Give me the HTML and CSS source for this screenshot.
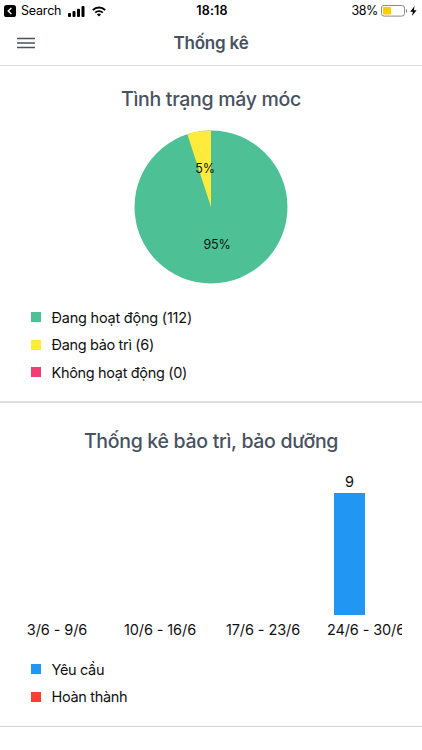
FILE: index.html
```html
<!DOCTYPE html>
<html lang="vi">
<head>
<meta charset="UTF-8">
<meta name="viewport" content="width=device-width, initial-scale=1.0">
<title>Thống kê</title>
<link rel="stylesheet" href="styles.css">
</head>
<body>

    <div class="status-bar">
        <div class="status-left">
            <svg width="12" height="12" viewBox="0 0 12 12">
                <rect width="12" height="12" rx="2.6" fill="#000"/>
                <path d="M7.4 3L4.2 6l3.2 3" fill="none" stroke="#fff" stroke-width="1.4"/>
            </svg>
            <span class="back-app">Search</span>
            <svg class="signal" width="17" height="11" viewBox="0 0 17 11">
                <rect x="0" y="7" width="3" height="4" rx="0.9"/>
                <rect x="4.5" y="5" width="3" height="6" rx="0.9"/>
                <rect x="9" y="2.8" width="3" height="8.2" rx="0.9"/>
                <rect x="13.5" y="0" width="3" height="11" rx="0.9"/>
            </svg>
            <svg class="wifi" width="14" height="11" viewBox="0 0 14 11">
                <path d="M0.8 4.1a8.8 8.8 0 0 1 12.4 0" fill="none" stroke="#000" stroke-width="2"/>
                <path d="M3.2 6.7a5.4 5.4 0 0 1 7.6 0" fill="none" stroke="#000" stroke-width="1.8"/>
                <path d="M7 10.6L4.9 8.5a3 3 0 0 1 4.2 0z"/>
            </svg>
        </div>
        <div class="time">18:18</div>
        <div class="status-right">
            <span class="percent">38%</span>
            <svg class="battery" width="27" height="12" viewBox="0 0 27 12">
                <rect x="0.5" y="0.5" width="23" height="10.6" rx="2.6" fill="#fff" stroke="#8c8c8c"/>
                <rect x="2" y="2" width="8" height="7.6" rx="0.8" fill="#fc0"/>
                <path d="M25 4v4c1.6-.6 1.6-3.4 0-4z" fill="#8c8c8c"/>
            </svg>
            <svg class="bolt" width="7" height="10" viewBox="0 0 7 10">
                <path d="M4.6 0L0.2 5.7h2.7L2 10l4.6-5.8H3.8z"/>
            </svg>
        </div>
    </div>

    <div class="navbar">
        <svg class="menu" width="18" height="12" viewBox="0 0 18 12">
            <path d="M0 1.5h18M0 6h18M0 10.5h18" stroke="#4a5362" stroke-width="1.4"/>
        </svg>
        <h1>Thống kê</h1>
    </div>

    <div class="section machines">
        <h2>Tình trạng máy móc</h2>
        <svg class="pie" width="154" height="154" viewBox="-77 -77 154 154">
            <circle r="76.5" fill="#4dc195"/>
            <path d="M0 0V-76.5A76.5 76.5 0 0 0 -23.64 -72.76z" fill="#ffeb3b"/>
            <text x="-6" y="-34">5%</text>
            <text x="6" y="41.5">95%</text>
        </svg>
        <div class="legend">
            <div class="legend-item"><i class="green"></i><span class="active">Đang hoạt động (112)</span></div>
            <div class="legend-item"><i class="yellow"></i><span>Đang bảo trì (6)</span></div>
            <div class="legend-item"><i class="pink"></i><span>Không hoạt động (0)</span></div>
        </div>
    </div>

    <div class="section maintenance">
        <h2>Thống kê bảo trì, bảo dưỡng</h2>
        <div class="chart">
            <div class="columns">
                <div class="column">
                    <div class="bars"></div>
                    <label>3/6 - 9/6</label>
                </div>
                <div class="column">
                    <div class="bars"></div>
                    <label>10/6 - 16/6</label>
                </div>
                <div class="column">
                    <div class="bars"></div>
                    <label>17/6 - 23/6</label>
                </div>
                <div class="column">
                    <div class="bars">
                        <div class="bar-group">
                            <span class="value">9</span>
                            <div class="bar" style="height: 122px"></div>
                        </div>
                    </div>
                    <label>24/6 - 30/6</label>
                </div>
            </div>
        </div>
        <div class="legend">
            <div class="legend-item"><i class="blue"></i><span>Yêu cầu</span></div>
            <div class="legend-item"><i class="red"></i><span>Hoàn thành</span></div>
        </div>
    </div>

</body>
</html>
```

FILE: styles.css
```css
body {
    margin: 0;
    background: #fff;
    color: #111;
    font-family: Inter, "Noto Sans", sans-serif;
    overflow: hidden;
}
svg {
    display: block;
    flex: none;
}
.status-bar {
    display: grid;
    grid-template-columns: 1fr auto 1fr;
    height: 22px;
    padding: 0 5px 0 4px;
    font-size: 12.5px;
    line-height: 22px;
    color: #000;
}
.status-left,
.status-right {
    display: flex;
    align-items: center;
}
.status-right {
    justify-content: flex-end;
}
.back-app {
    margin-left: 5px;
    width: 39px;
    letter-spacing: -0.2px;
    white-space: nowrap;
}
.signal {
    margin-left: 8px;
}
.wifi {
    margin-left: 7px;
}
.time {
    padding-left: 3px;
    font-weight: 600;
    letter-spacing: 0.2px;
}
.percent {
    letter-spacing: -0.4px;
}
.battery {
    margin-left: 3px;
}
.bolt {
    margin-left: 2px;
}
.navbar {
    display: grid;
    grid-template-columns: 60px 1fr 60px;
    align-items: center;
    height: 43px;
    border-bottom: 1px solid #dcdcdc;
}
.menu {
    margin-left: 17px;
    margin-bottom: 1px;
}
h1,
h2 {
    margin: 0;
    color: #475260;
    text-align: center;
    white-space: nowrap;
}
h1 {
    padding-bottom: 2px;
    font-size: 17px;
    font-weight: 600;
    line-height: 40px;
    letter-spacing: -0.2px;
}
h2 {
    font-size: 19.5px;
    font-weight: 500;
    line-height: 30px;
    letter-spacing: -0.3px;
}
.section {
    box-sizing: border-box;
}
.machines {
    height: 337px;
    padding-top: 18px;
    border-bottom: 2px solid #dedede;
}
.pie {
    margin: 16px auto 0;
}
.pie text {
    font-size: 12.5px;
    letter-spacing: -0.2px;
    text-anchor: middle;
    fill: #111;
}
.legend {
    padding-left: 31px;
    font-size: 14.5px;
    letter-spacing: -0.33px;
}
.active {
    letter-spacing: -0.22px;
}
.machines .legend {
    margin-top: 19.5px;
}
.legend-item {
    display: flex;
    align-items: center;
    height: 27.5px;
}
.legend-item i {
    width: 10px;
    height: 10px;
    margin-right: 10.5px;
}
.green { background: #4dc195; }
.yellow { background: #ffeb3b; }
.pink { background: #f43b75; }
.blue { background: #2196f3; }
.red { background: #f44336; }
.maintenance {
    height: 324px;
    padding-top: 23px;
    border-bottom: 1px solid #d2d2d2;
}
.chart {
    margin: 18px 20px 0;
    overflow: hidden;
}
.columns {
    display: grid;
    grid-template-columns: repeat(4, 103px);
    margin-left: -15px;
}
.bars {
    display: flex;
    align-items: flex-end;
    height: 141px;
    padding-left: 20px;
}
.bar-group {
    width: 31px;
    font-size: 14.5px;
    text-align: center;
}
.value {
    display: block;
    line-height: 22px;
}
.bar {
    background: #2196f3;
}
.column label {
    display: block;
    padding: 1px 0 0 1px;
    font-size: 14.5px;
    line-height: 28px;
    letter-spacing: -0.1px;
    text-align: center;
    white-space: nowrap;
}
.maintenance .legend {
    margin-top: 11.5px;
}
```
